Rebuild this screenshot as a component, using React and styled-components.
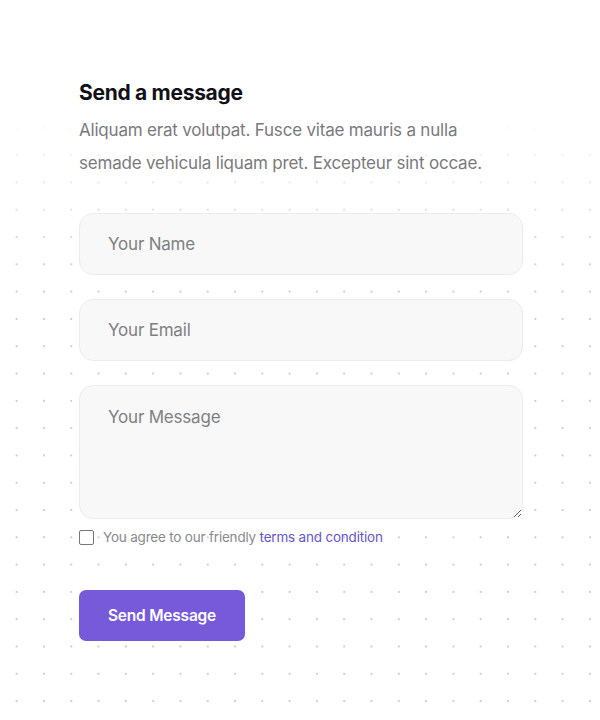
import React from "react";
import styled, { createGlobalStyle } from "styled-components";

const Global = createGlobalStyle`
  html, body { margin: 0; padding: 0; background: #fff; }
  body { font-family: "Inter", "Noto Sans", sans-serif; }
`;

const Page = styled.div`
  width: 600px;
  height: 720px;
  box-sizing: border-box;
  padding: 78px 77px 0 79px;
  background-color: #fff;
  background-image:
    linear-gradient(to bottom, #fff 0px, #fff 100px, rgba(255,255,255,0) 280px),
    radial-gradient(circle, #cfcfd3 0.9px, rgba(255,255,255,0) 1.4px);
  background-size: 100% 100%, 27.3px 27.3px;
  background-position: 0 0, 3px 5px;
  background-repeat: no-repeat, repeat;
`;

const Form = styled.form`
  display: flex;
  flex-direction: column;
  width: 444px;
`;

const Title = styled.h2`
  margin: 0;
  font-size: 21px;
  font-weight: 700;
  color: #111118;
  letter-spacing: -0.3px;
  line-height: 30px;
`;

const Lead = styled.p`
  margin: 6px 0 0;
  font-size: 17px;
  line-height: 33px;
  color: #7a7a7e;
  letter-spacing: -0.2px;
`;

const Fields = styled.div`
  display: flex;
  flex-direction: column;
  gap: 24px;
  margin-top: 33px;
`;

const fieldStyles = `
  box-sizing: border-box;
  width: 100%;
  border: 1px solid #ececee;
  border-radius: 14px;
  background: #f8f8f8;
  font-family: "Inter", "Noto Sans", sans-serif;
  font-size: 17px;
  color: #333;
  letter-spacing: -0.2px;
  outline: none;
  &::placeholder { color: #808084; }
`;

const Input = styled.input`
  ${fieldStyles}
  height: 62px;
  padding: 0 28px;
`;

const TextArea = styled.textarea`
  ${fieldStyles}
  height: 134px;
  padding: 20px 28px;
  resize: vertical;
  line-height: 22px;
`;

const Agree = styled.label`
  display: flex;
  align-items: center;
  gap: 9px;
  margin-top: 10px;
  font-size: 13.5px;
  color: #8a8a8e;
  letter-spacing: -0.2px;
`;

const Box = styled.span`
  box-sizing: border-box;
  width: 15px;
  height: 15px;
  border: 1.5px solid #777;
  border-radius: 2px;
  background: #fff;
`;

const Terms = styled.span`
  color: #6a55c8;
`;

const Button = styled.button`
  align-self: flex-start;
  margin-top: 45px;
  width: 166px;
  height: 51px;
  border: none;
  border-radius: 7px;
  background: #775ada;
  color: #fff;
  font-family: "Inter", "Noto Sans", sans-serif;
  font-size: 15.5px;
  font-weight: 600;
  letter-spacing: -0.2px;
  cursor: pointer;
`;

export default function App() {
  return (
    <>
      <Global />
      <Page>
        <Form onSubmit={(e) => e.preventDefault()}>
          <Title>Send a message</Title>
          <Lead>
            Aliquam erat volutpat. Fusce vitae mauris a nulla semade vehicula liquam pret. Excepteur sint occae.
          </Lead>
          <Fields>
            <Input placeholder="Your Name" />
            <Input placeholder="Your Email" />
            <TextArea placeholder="Your Message" />
          </Fields>
          <Agree>
            <Box />
            <span>
              You agree to our friendly <Terms>terms and condition</Terms>
            </span>
          </Agree>
          <Button type="submit">Send Message</Button>
        </Form>
      </Page>
    </>
  );
}
